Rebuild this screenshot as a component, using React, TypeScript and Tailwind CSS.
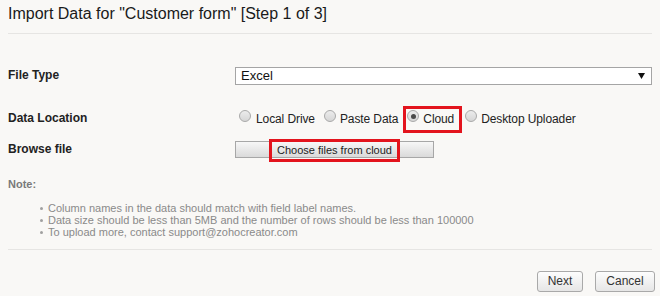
import React from "react";

const Radio = ({ checked = false }: { checked?: boolean }) => (
  <span className="w-[12px] h-[12px] rounded-full border border-[#a9a9a9] bg-gradient-to-b from-[#ececec] to-[#d6d6d6] flex items-center justify-center shrink-0">
    {checked && <span className="w-[5px] h-[5px] rounded-full bg-[#4a4a4a]" />}
  </span>
);

export default function App() {
  return (
    <div className="w-[660px] h-[296px] overflow-hidden bg-[#f9f8f6] px-[8px] font-['Liberation_Sans',Arial,sans-serif] text-[#222]">
      {/* Header */}
      <div className="h-[34px] border-b border-[#e6e5e3]">
        <div className="pt-[5px] text-[16px] leading-[18px] text-[#1a1a1a]">
          Import Data for "Customer form" [Step 1 of 3]
        </div>
      </div>

      {/* File Type */}
      <div className="mt-[33px] flex items-start">
        <div className="w-[227px] text-[12px] font-bold leading-[16px]">File Type</div>
        <div className="w-[417px] h-[18px] border border-[#a5a5a5] bg-white flex items-center justify-between pl-[5px] pr-[6px]">
          <span className="text-[13px] leading-[16px] text-[#111]">Excel</span>
          <svg width="7" height="6" viewBox="0 0 7 6">
            <polygon points="0,0 7,0 3.5,6" fill="#111" />
          </svg>
        </div>
      </div>

      {/* Data Location */}
      <div className="mt-[21px] h-[27px] flex items-start">
        <div className="w-[227px] pt-[4px] text-[12px] font-bold leading-[16px]">Data Location</div>
        <div className="flex items-start text-[12px] leading-[16px] tracking-[-0.1px]">
          <div className="ml-[4px] flex items-start">
            <span className="mt-[4px]"><Radio /></span>
            <span className="ml-[5px] mt-[5px]">Local Drive</span>
          </div>
          <div className="ml-[9px] flex items-start">
            <span className="mt-[4px]"><Radio /></span>
            <span className="ml-[4px] mt-[5px]">Paste Data</span>
          </div>
          <div className="ml-[5px] h-[27px] border-[3px] border-[#e3141d] pl-[1px] pr-[5px] flex items-start">
            <span className="mt-[1px]"><Radio checked /></span>
            <span className="ml-[4px] mt-[2px]">Cloud</span>
          </div>
          <div className="ml-[3px] flex items-start">
            <span className="mt-[4px]"><Radio /></span>
            <span className="ml-[4px] mt-[5px]">Desktop Uploader</span>
          </div>
        </div>
      </div>

      {/* Browse file */}
      <div className="mt-[8px] flex items-start">
        <div className="w-[227px] text-[12px] font-bold leading-[16px]">Browse file</div>
        <div className="relative w-[199px] h-[17px] border border-[#a7a7a7] bg-gradient-to-b from-[#f7f7f7] to-[#dadada] text-center text-[11px] leading-[14px] pt-[1px] text-[#222]">
          Choose files from cloud
          <div className="absolute left-[33px] top-[-3px] w-[131px] h-[23px] border-[3px] border-[#e3141d]" />
        </div>
      </div>

      {/* Note */}
      <div className="mt-[20px] text-[11px] font-bold leading-[13px] text-[#7a7a7a]">Note:</div>
      <ul className="mt-[11px] text-[11px] leading-[12px] text-[#8a8a8a]">
        <li className="flex items-center pl-[32px]">
          <span className="w-[3px] h-[3px] rounded-full bg-[#a0a0a0] mr-[5px] mt-[1px]" />
          Column names in the data should match with field label names.
        </li>
        <li className="flex items-center pl-[32px]">
          <span className="w-[3px] h-[3px] rounded-full bg-[#a0a0a0] mr-[5px] mt-[1px]" />
          Data size should be less than 5MB and the number of rows should be less than 100000
        </li>
        <li className="flex items-center pl-[32px]">
          <span className="w-[3px] h-[3px] rounded-full bg-[#a0a0a0] mr-[5px] mt-[1px]" />
          To upload more, contact support@zohocreator.com
        </li>
      </ul>

      {/* Footer */}
      <div className="mt-[11px] h-px bg-[#e6e5e3]" />
      <div className="mt-[21px] flex justify-end gap-[12px] -mr-[3px]">
        <button className="w-[46px] h-[21px] border border-[#a9a9a9] rounded-[3px] bg-gradient-to-b from-[#fdfdfd] to-[#e6e6e6] text-[12px] leading-[19px] text-[#333]">
          Next
        </button>
        <button className="w-[60px] h-[21px] border border-[#a9a9a9] rounded-[3px] bg-gradient-to-b from-[#fdfdfd] to-[#e6e6e6] text-[12px] leading-[19px] text-[#333]">
          Cancel
        </button>
      </div>
    </div>
  );
}
